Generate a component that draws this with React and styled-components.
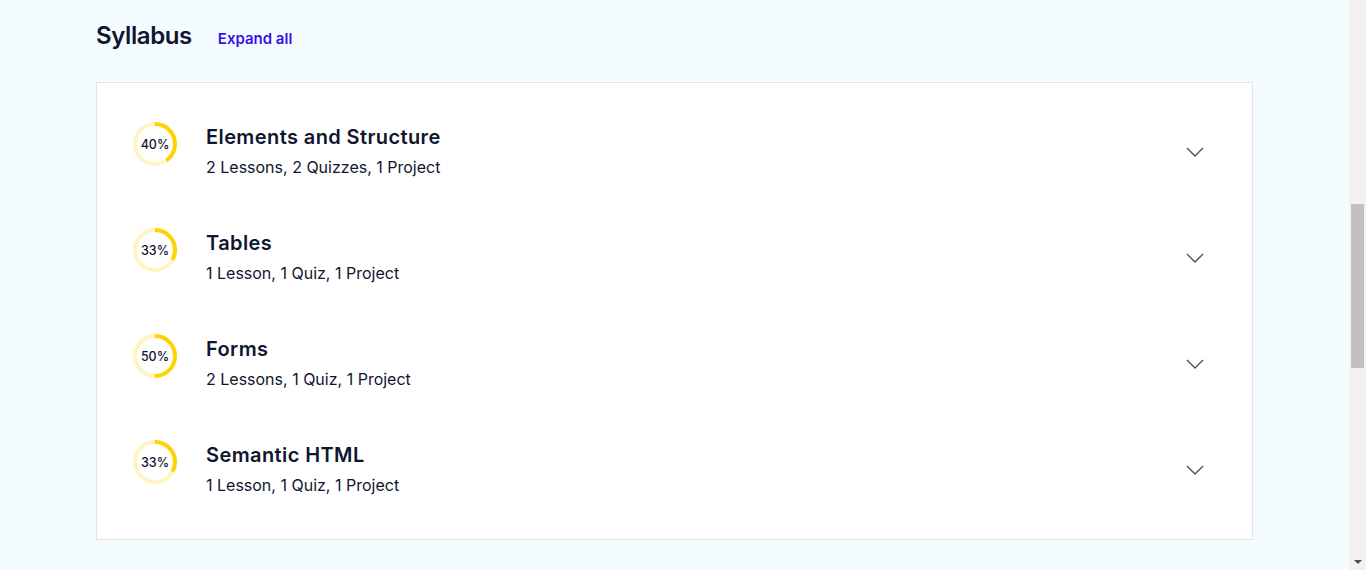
import styled, { createGlobalStyle } from 'styled-components';

const GlobalStyle = createGlobalStyle`
  html, body {
    margin: 0;
    padding: 0;
    height: 100%;
    overflow: hidden;
  }
  body {
    font-family: Inter, "Noto Sans", "Liberation Sans", sans-serif;
    color: #10162f;
    background: #f5fcff;
  }
`;

const modules = [
  { title: 'Elements and Structure', meta: '2 Lessons, 2 Quizzes, 1 Project', percent: 40 },
  { title: 'Tables', meta: '1 Lesson, 1 Quiz, 1 Project', percent: 33 },
  { title: 'Forms', meta: '2 Lessons, 1 Quiz, 1 Project', percent: 50 },
  { title: 'Semantic HTML', meta: '1 Lesson, 1 Quiz, 1 Project', percent: 33 },
];

const Page = styled.div`
  display: flex;
  height: 570px;
  width: 1366px;
`;

const Main = styled.main`
  flex: 1;
  padding: 21px 96px 0 96px;
`;

const Header = styled.div`
  display: flex;
  align-items: baseline;
  gap: 26px;
  height: 61px;
`;

const Title = styled.h2`
  margin: 0;
  font-size: 24px;
  font-weight: 600;
  letter-spacing: -0.4px;
`;

const ExpandButton = styled.button`
  border: none;
  background: none;
  padding: 0;
  font-family: inherit;
  font-size: 15px;
  font-weight: 600;
  color: #3a10e5;
  cursor: pointer;
`;

const Card = styled.section`
  background: #fff;
  border: 1px solid #e0e3e8;
  padding: 16px 0;
`;

const Row = styled.div`
  display: flex;
  align-items: flex-start;
  height: 106px;
  box-sizing: border-box;
  padding: 23px 48px 0 36px;
`;

const Info = styled.div`
  flex: 1;
  margin-left: 29px;
  padding-top: 1px;
`;

const RowTitle = styled.div`
  font-size: 20px;
  font-weight: 600;
  line-height: 28px;
  letter-spacing: 0.4px;
`;

const Meta = styled.div`
  font-size: 16px;
  line-height: 24px;
  margin-top: 4px;
`;

const Chevron = styled.div`
  display: flex;
  margin-top: 25px;
`;

const Ring = styled.div`
  position: relative;
  width: 44px;
  height: 44px;
  flex-shrink: 0;
`;

const RingLabel = styled.span`
  position: absolute;
  inset: 0;
  display: flex;
  align-items: center;
  justify-content: center;
  font-size: 12.5px;
  font-weight: 500;
`;

const ScrollTrack = styled.div`
  width: 17px;
  background: #f1f1f1;
  display: flex;
  flex-direction: column;
  align-items: center;
`;

const ScrollThumb = styled.div`
  width: 13px;
  height: 164px;
  margin-top: 204px;
  background: #c1c1c1;
`;

const ScrollArrow = styled.div`
  margin-top: auto;
  margin-bottom: 6px;
  width: 0;
  height: 0;
  border-left: 4px solid transparent;
  border-right: 4px solid transparent;
  border-top: 4px solid #505050;
`;

function ProgressRing({ percent }) {
  const r = 20;
  const c = 2 * Math.PI * r;
  return (
    <Ring>
      <svg width="44" height="44" viewBox="0 0 44 44">
        <circle cx="22" cy="22" r={r} fill="none" stroke="#fff4c2" strokeWidth="4" />
        <circle
          cx="22"
          cy="22"
          r={r}
          fill="none"
          stroke="#ffd300"
          strokeWidth="4"
          strokeDasharray={`${(c * percent) / 100} ${c}`}
          transform="rotate(-90 22 22)"
        />
      </svg>
      <RingLabel>{percent}%</RingLabel>
    </Ring>
  );
}

function ModuleRow({ title, meta, percent }) {
  return (
    <Row>
      <ProgressRing percent={percent} />
      <Info>
        <RowTitle>{title}</RowTitle>
        <Meta>{meta}</Meta>
      </Info>
      <Chevron>
        <svg width="18" height="10" viewBox="0 0 18 10" fill="none">
          <path d="M1 1l8 8 8-8" stroke="#4b5066" strokeWidth="1.4" />
        </svg>
      </Chevron>
    </Row>
  );
}

export default function App() {
  return (
    <>
      <GlobalStyle />
      <Page>
        <Main>
          <Header>
            <Title>Syllabus</Title>
            <ExpandButton>Expand all</ExpandButton>
          </Header>
          <Card>
            {modules.map((m) => (
              <ModuleRow key={m.title} {...m} />
            ))}
          </Card>
        </Main>
        <ScrollTrack>
          <ScrollThumb />
          <ScrollArrow />
        </ScrollTrack>
      </Page>
    </>
  );
}
